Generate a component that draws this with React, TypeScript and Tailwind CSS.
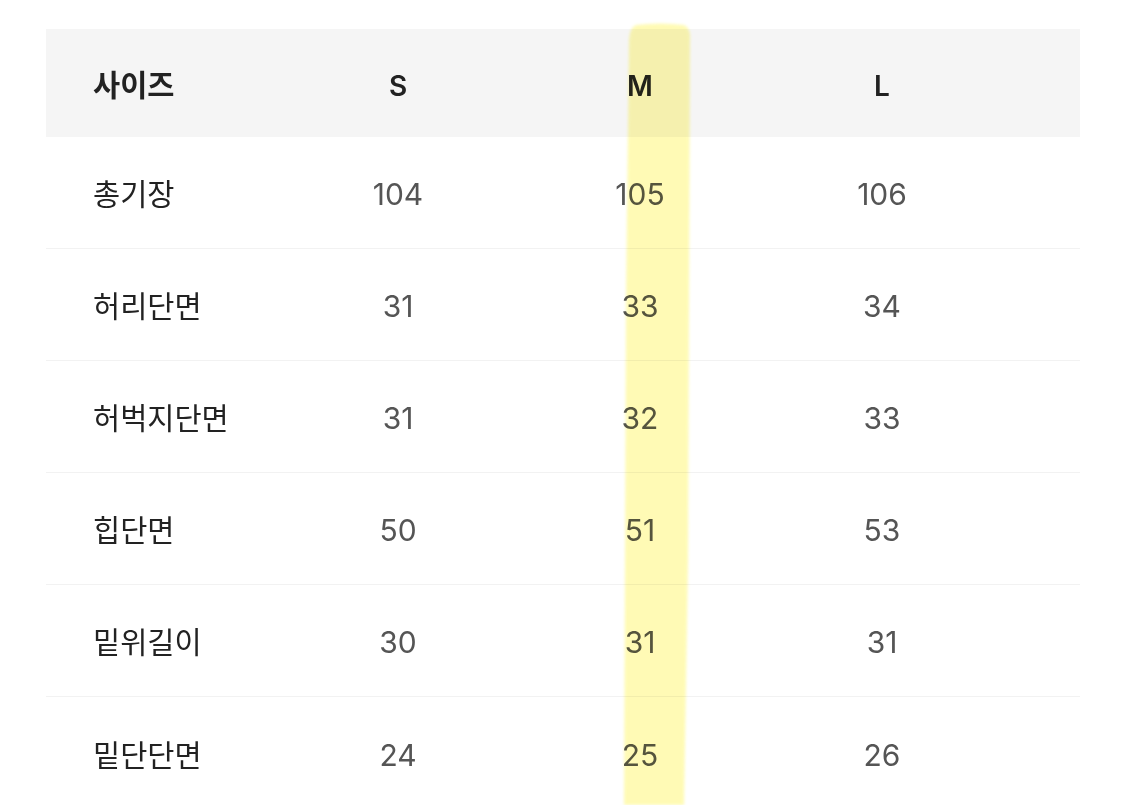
const rows: [string, string, string, string][] = [
  ["총기장", "104", "105", "106"],
  ["허리단면", "31", "33", "34"],
  ["허벅지단면", "31", "32", "33"],
  ["힙단면", "50", "51", "53"],
  ["밑위길이", "30", "31", "31"],
  ["밑단단면", "24", "25", "26"],
];

const font = { fontFamily: '"Inter", "Noto Sans CJK KR", sans-serif' };

export default function App() {
  return (
    <div className="relative h-[805px] w-[1125px] overflow-hidden bg-white pl-[46px] pt-[29px]" style={font}>
      <div className="w-[1034px]">
        <div className="flex h-[108px] items-center bg-[#f5f5f5] pt-[5px] font-semibold text-[#222]">
          <div className="w-[231px] pl-[47px] text-[29.5px]">사이즈</div>
          <div className="w-[242px] text-center text-[28px]">S</div>
          <div className="w-[242px] text-center text-[28px]">M</div>
          <div className="w-[242px] text-center text-[28px]">L</div>
        </div>
        {rows.map((r, i) => (
          <div
            key={r[0]}
            className={`flex h-[112px] items-center pt-[4px] ${i < rows.length - 1 ? "border-b border-[#f2f2f2]" : ""}`}
          >
            <div className="w-[231px] pl-[47px] text-[29.5px] text-[#222]">{r[0]}</div>
            <div className="w-[242px] text-center text-[30px] text-[#555]">{r[1]}</div>
            <div className="w-[242px] text-center text-[30px] text-[#555]">{r[2]}</div>
            <div className="w-[242px] text-center text-[30px] text-[#555]">{r[3]}</div>
          </div>
        ))}
      </div>

      {/* highlighter stroke over the M column */}
      <svg className="pointer-events-none absolute left-0 top-0 mix-blend-multiply" width="1125" height="805">
        <defs>
          <filter id="soft">
            <feGaussianBlur stdDeviation="1.5" />
          </filter>
        </defs>
        <path
          d="M636 25 Q660 22 684 25 Q691 28 690 40 L689 300 L688 560 L684 805 L624 805 L625 560 L626 300 L629 40 Q630 27 636 25 Z"
          fill="#fffaa8"
          opacity="0.85"
          filter="url(#soft)"
        />
      </svg>
    </div>
  );
}
